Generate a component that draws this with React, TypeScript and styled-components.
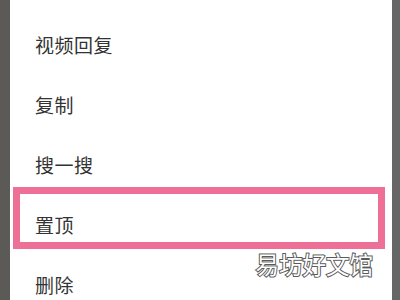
import styled, { createGlobalStyle } from "styled-components";

const GlobalStyle = createGlobalStyle`
  html, body {
    margin: 0;
    padding: 0;
    width: 400px;
    height: 300px;
    overflow: hidden;
    background: #5e5e5e;
  }
`;

const Screen = styled.div`
  display: flex;
  width: 400px;
  height: 300px;
  overflow: hidden;
  position: relative;
`;

const Edge = styled.div<{ $w: number; $bg: string }>`
  width: ${(p) => p.$w}px;
  flex-shrink: 0;
  background: ${(p) => p.$bg};
`;

const Sheet = styled.div`
  flex: 1;
  background: #ffffff;
  display: flex;
  flex-direction: column;
  padding-top: 14px;
`;

const Item = styled.div`
  position: relative;
  height: 60px;
  flex-shrink: 0;
  display: flex;
  align-items: center;
  padding-left: 25px;
  font-family: "Noto Sans CJK SC", "Noto Sans", sans-serif;
  font-size: 19px;
  color: #333333;
  letter-spacing: 0.5px;
`;

const Highlight = styled.div`
  position: absolute;
  left: 3px;
  right: 7px;
  top: -7px;
  bottom: 5px;
  border: 7.5px solid #ef7097;
  pointer-events: none;
`;

const Watermark = styled.div`
  position: absolute;
  right: 27px;
  bottom: 19px;
  font-family: "Noto Sans CJK SC", sans-serif;
  font-size: 23.5px;
  color: #ffffff;
  -webkit-text-stroke: 2px #5a5a5a;
  paint-order: stroke fill;
  letter-spacing: 0;
`;

const items = ["视频回复", "复制", "搜一搜", "置顶", "删除"];

export default function App() {
  return (
    <>
      <GlobalStyle />
      <Screen>
        <Edge $w={10} $bg="#5c5a57" />
        <Sheet>
          {items.map((label) => (
            <Item key={label}>
              {label}
              {label === "置顶" && <Highlight />}
            </Item>
          ))}
        </Sheet>
        <Edge $w={8} $bg="#666666" />
        <Watermark>易坊好文馆</Watermark>
      </Screen>
    </>
  );
}
